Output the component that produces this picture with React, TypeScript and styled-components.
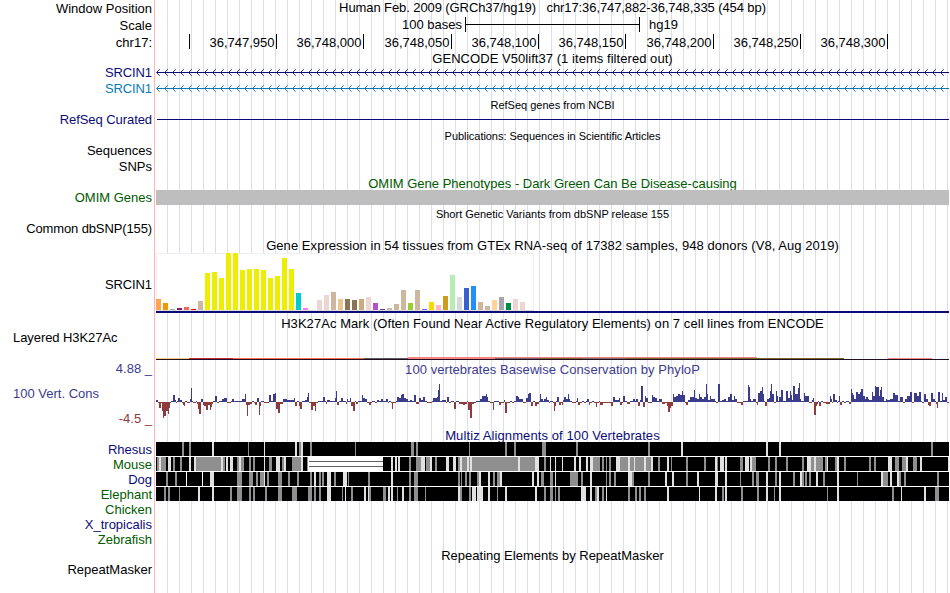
import React from "react";
import styled, { createGlobalStyle } from "styled-components";

const GlobalStyle = createGlobalStyle`
  body { margin: 0; background: #fff; }
  svg { display: block; shape-rendering: crispEdges; }
`;

const TRACK_WIDTH = 793;
const BLACK = "#000";
const NAVY = "#0c0c78";
const BLUE = "#0c78b4";
const GREEN = "#005a00";
const WIGGLE_UP = "#3c3c8c";
const WIGGLE_DOWN = "#8c3c3c";

const Browser = styled.main`
  width: 949px;
  height: 593px;
  overflow: hidden;
  font: 13px/15px "Liberation Sans", Arial, sans-serif;
  color: ${BLACK};
  background:
    linear-gradient(#ffb4b4, #ffb4b4) 154px 0 / 1px 100% no-repeat,
    repeating-linear-gradient(to right, #dcdcf8 0 1px, transparent 1px 12px) 167px 0 / 782px 100% no-repeat;
`;

const TrackRow = styled.section<{ $height: number }>`
  display: grid;
  grid-template-columns: 154px ${TRACK_WIDTH}px;
  column-gap: 2px;
  height: ${(p) => p.$height}px;
`;

const Column = styled.div`
  display: flex;
  flex-direction: column;
  min-width: 0;
`;

const Label = styled.div<{ $gap?: number; $color?: string; $left?: boolean; $spacing?: number }>`
  flex: none;
  height: 15px;
  margin-top: ${(p) => p.$gap ?? 0}px;
  padding: 0 2px 0 13px;
  text-align: ${(p) => (p.$left ? "left" : "right")};
  letter-spacing: ${(p) => p.$spacing ?? 0}px;
  color: ${(p) => p.$color ?? BLACK};
  white-space: pre;
`;

const Title = styled.h2<{ $gap?: number; $height?: number; $color?: string; $spacing?: number; $small?: boolean }>`
  flex: none;
  height: ${(p) => p.$height ?? 15}px;
  margin: ${(p) => p.$gap ?? 0}px 0 0;
  overflow: hidden;
  font-size: ${(p) => (p.$small ? 11 : 13)}px;
  font-weight: normal;
  letter-spacing: ${(p) => p.$spacing ?? 0}px;
  text-align: center;
  color: ${(p) => p.$color ?? BLACK};
  white-space: pre;
`;

const Figure = styled.div<{ $gap?: number }>`
  flex: none;
  margin-top: ${(p) => p.$gap ?? 0}px;
`;

const ScaleBar = styled.div`
  display: grid;
  grid-template-columns: 309px 175px auto;
  align-items: start;
`;

const ScaleStart = styled.span`
  padding-right: 3px;
  text-align: right;
`;

const ScaleEnd = styled.span`
  padding-left: 9px;
`;

const Ruler = styled.div`
  display: flex;
`;

const Tick = styled.div<{ $width: number }>`
  box-sizing: border-box;
  flex: none;
  width: ${(p) => p.$width}px;
  height: 15px;
  padding: 1px 1.5px 0 0;
  border-right: 1px solid ${BLACK};
  text-align: right;
  line-height: 15px;
`;

const OmimBar = styled.div`
  height: 15px;
  background: #bebebe;
`;

const AlignmentStack = styled.div`
  display: grid;
  row-gap: 1px;
  background: #fff;
`;

const ticks: [number, string][] = [
  [34, ""],
  [87, "36,747,950"],
  [87, "36,748,000"],
  [88, "36,748,050"],
  [87, "36,748,100"],
  [87, "36,748,150"],
  [88, "36,748,200"],
  [87, "36,748,250"],
  [87, "36,748,300"],
];

function GeneLine({ y, color }: { y: number; color: string }) {
  const arrows = Array.from({ length: 99 }, (_, i) => i * 8 + 0.5);
  return (
    <g stroke={color} fill="none">
      <line x1={1} x2={TRACK_WIDTH} y1={y + 0.5} y2={y + 0.5} />
      <path
        shapeRendering="auto"
        strokeWidth={0.85}
        d={arrows.map((x) => `M${x + 3.3} ${y - 2.8}L${x} ${y + 0.5}L${x + 3.3} ${y + 3.8}`).join("")}
      />
    </g>
  );
}

const Y = "#eeee00";
const TAN = "#cdb79e";
const ROSE = "#eed5d2";
const tissues: [string, number][] = [
  ["#ffa54f", 11], ["#ee9a00", 7], ["#8fbc8f", 1], ["#8b1c62", 2], ["#ee6a50", 3], ["#ff0000", 1], [TAN, 9],
  [Y, 37], [Y, 38], [Y, 32], [Y, 57], [Y, 57], [Y, 40], [Y, 41], [Y, 41], [Y, 40], [Y, 32], [Y, 34], [Y, 52], [Y, 41],
  ["#00cdcd", 17], ["#ee82ee", 2], ["#9ac0cd", 0], [ROSE, 10], [ROSE, 15], [TAN, 18], ["#eec591", 11],
  ["#8b7355", 11], ["#8b7355", 10], ["#cdaa7d", 11], [ROSE, 13], ["#b452cd", 7], ["#7a378b", 1], [TAN, 2], [TAN, 6],
  [TAN, 20], ["#9acd32", 7], [TAN, 20], ["#7a67ee", 1], ["#ffd700", 8], ["#ffb6c1", 5], ["#cd9b1d", 14],
  ["#b4eeb4", 35], ["#d9d9d9", 13], ["#3a5fcd", 22], ["#1e90ff", 24], [TAN, 8], [TAN, 4], ["#ffd39b", 10],
  ["#a6a6a6", 13], ["#008b45", 7], [ROSE, 11], [ROSE, 8], ["#ff00ff", 0],
];

function ExpressionChart() {
  return (
    <svg width={TRACK_WIDTH} height={60}>
      <rect x={0.5} y={0.5} width={377} height={57} fill="#fff" stroke="#f0f0f0" />
      <rect x={0} y={57} width={378} height={1} fill="#dcdcdc" />
      {tissues.map(([color, h], i) => (
        <rect key={i} x={i * 7} y={57 - h} width={5} height={h} fill={color} />
      ))}
      <rect x={0} y={58} width={TRACK_WIDTH} height={2} fill={NAVY} />
    </svg>
  );
}

// x, y, width, height, colour of every overlaid cell-line signal
const h3k27ac: [number, number, number, number, string][] = [
  [0, 1, 33, 1, "#ffcc80"],
  [33, 1, 44, 1, "#c4283c"],
  [77, 1, 131, 1, "#ff6a50"],
  [208, 1, 44, 1, "#605860"],
  [252, 0, 87, 2, "#ff8080"],
  [339, 0, 262, 1, "#f08080"],
  [339, 1, 44, 1, "#806070"],
  [383, 1, 43, 1, "#80602c"],
  [426, 1, 44, 1, "#806868"],
  [470, 1, 218, 1, "#7c6428"],
  [732, 1, 44, 1, "#ff8080"],
];

// Conservation scores: "end:height" runs, ends in thirds of a pixel from each block's start.
const wiggleBlocks: { x: number; start: number; runs: string }[] = [
  {
    x: -6,
    start: 18,
    runs: "24:2 27:-1 33:-6 36:-1 39:-9 42:-16 48:-14 51:-9 54:-9 57:-12 60:-6 63:-1 69:1 75:7 78:2 81:-1 84:1 90:4 96:2 99:-1 102:-3 105:-4 111:1 120:-1 123:3 126:14 129:1 138:-1 141:1 144:-2 147:-7 153:-12 159:3 162:-3 168:-4 174:-8 180:-3 183:-8 186:-5 189:-2 195:1 201:6 207:-1 216:1 222:3 231:4 243:-1 246:1 252:3 276:1 285:3 288:8 291:-3 294:-14 300:-3 306:-2 312:1 315:-1 321:-3 327:4 330:-13 333:-4 342:1 357:-1 363:7 369:1 372:8 375:8 378:9 384:-7 390:-11 399:-2 411:3 426:2 432:2 435:4 441:-4 447:1 450:-4 456:-7 465:1 471:2 474:5 477:9 483:-1 489:-8 495:-4 498:-9 504:-1 519:1 525:5 528:1 531:-2 540:2 555:1 558:4 561:11 567:-3 573:1 579:4 588:1 591:-2 594:3 600:1",
  },
  {
    x: 194,
    start: 0,
    runs: "3:4 9:-4 15:-9 18:1 24:-2 36:1 39:7 45:4 51:3 57:-1 63:-3 66:-1 75:1 81:-1 87:2 93:1 99:3 108:1 114:3 117:-1 123:1 126:-1 129:-7 138:-1 141:1 147:5 153:4 157:7 162:8 168:4 174:3 180:1 186:2 192:1 198:7 207:-2 213:4 219:2 225:5 231:1 246:-1 249:1 261:4 264:5 267:12 270:18 276:1 288:2 291:-1 297:5 303:-1 312:1 318:-7 327:1 339:-2 345:-3 351:-2 354:1 360:-8 366:-16 372:-2 378:-1 390:1 396:3 408:6 411:8 414:5 420:1 429:-1 432:-8 447:1 453:-3 462:-1 465:2 471:-11 480:-1 486:1 492:-1 498:1 504:6 507:5 519:3 528:-1 534:4 537:8 543:9 549:-4 555:1 561:-4 567:-2 570:1 573:8 579:3 582:1 588:3 591:5 597:2 600:-1",
  },
  {
    x: 394,
    start: 0,
    runs: "9:1 12:-1 15:-9 18:-4 21:1 27:5 33:-3 36:-1 39:-3 42:2 48:5 54:3 57:8 60:3 66:1 78:-1 81:1 84:4 90:-3 96:-1 102:1 108:-1 111:1 117:3 120:-3 126:-1 132:1 138:-1 141:-5 147:-1 150:1 159:-3 183:-1 189:-4 195:5 207:2 210:4 216:-3 219:-1 225:6 231:1 240:-2 249:1 255:3 258:1 264:3 270:-4 273:2 279:16 285:-5 288:6 294:4 306:-1 309:7 315:5 321:4 327:1 336:3 345:-2 351:-1 354:-4 360:-10 363:-6 369:-4 372:8 378:5 384:6 390:8 396:7 399:11 405:7 408:-1 414:-3 420:2 432:5 435:12 441:4 447:3 450:8 456:5 462:3 468:5 471:18 474:8 480:2 483:6 495:3 498:1 504:-1 510:18 516:1 522:2 528:3 534:1 540:5 546:8 552:2 555:6 561:3 573:-1 579:-3 594:1 597:17 600:15",
  },
  {
    x: 594,
    start: 0,
    runs: "3:3 9:1 18:3 21:-1 24:-3 30:9 36:11 39:15 42:8 45:1 51:-4 57:3 60:4 63:11 66:18 72:8 78:-1 81:11 84:6 87:1 93:5 99:12 108:1 114:11 120:4 123:11 126:7 129:2 135:16 144:8 147:14 150:19 153:3 162:1 165:9 177:6 186:-1 189:2 192:4 198:-13 201:-4 204:-2 207:1 213:-4 219:1 228:-1 240:-2 243:6 246:3 249:-1 255:8 261:2 264:-1 267:1 270:6 276:-3 282:1 288:-1 297:1 303:-2 306:13 309:9 312:7 318:3 324:10 330:8 333:10 339:13 345:6 348:3 354:5 357:3 366:2 369:10 375:6 378:16 387:15 390:6 393:12 396:15 402:5 408:1 411:3 420:2 429:3 435:9 444:7 450:1 459:5 465:-1 471:3 480:6 486:10 492:-1 501:9 507:6 513:10 516:1 522:-1 528:8 534:3 537:-3 543:-4 549:9 555:3 558:1 561:-2 564:-6 570:10 576:1 579:9 585:2 591:5 597:-1",
  },
];

function Conservation() {
  const zero = 22;
  return (
    <svg width={TRACK_WIDTH} height={44}>
      {wiggleBlocks.map((block) => {
        let from = block.start;
        return block.runs.split(" ").map((run) => {
          const [end, value] = run.split(":").map(Number);
          const x = block.x + Math.round(from / 3);
          const width = block.x + Math.round(end / 3) - x;
          from = end;
          return (
            <rect
              key={`${block.x}-${end}`}
              x={x}
              y={value > 0 ? zero - value : zero}
              width={width}
              height={Math.abs(value)}
              fill={value > 0 ? WIGGLE_UP : WIGGLE_DOWN}
            />
          );
        });
      })}
    </svg>
  );
}

// Identity bands per species, four blocks of 200px each; g = partial, l = low identity,
// positions in thirds of a pixel from the block's start.
const rhesus = [
  "g96-102 g117-123 l186-192 g294-297 l342-345 l435-441 g447-453 l453-459 g480-486",
  "g15-18 g183-192 g198-204 g357-360 g465-471 g492-498 g576-588",
  "g78-84 g294-300 l393-399",
  "l48-54 l87-93 g543-549",
];
const mouse = [
  "g21-27 l27-33 g33-48 l54-63 g69-75 g90-96 l117-123 l132-138 g138-213 l213-219 g219-225 l228-234 l240-249 g261-267 l267-273 g273-282 g297-303 g309-315 l342-345 g357-366 l378-390 g396-402 l402-408 g426-453 l453-459 g471-474",
  "l123-129 l135-141 l144-150 g177-183 g198-213 l213-225 g228-240 l240-246 g255-261 l288-297 l309-318 g324-330 l330-336 g336-351 l351-357 g357-360 l360-366 g366-504 l504-510 g510-555 l555-567 g582-588",
  "l0-3 l15-18 l36-39 l72-78 l87-93 l108-114 l120-129 g129-150 g156-162 g168-171 g177-183 l198-210 g210-234 l234-240 g240-252 l252-255 g255-282 l282-288 g288-303 l303-309 g324-330 l351-357 g363-366 g408-414 g462-468 l495-501 g501-504 l510-522 l525-531 g570-579 l585-597",
  "l0-6 g6-18 g54-60 g75-81 g108-114 g156-162 l171-183 g183-192 l192-198 g198-219 g225-231 l231-234 g255-261 l261-267 g282-288 g357-363 g372-378 l414-426 g435-447 g456-468 l468-474 g489-501 l510-516 l594-597",
];
const dog = [
  "g48-54 g75-81 w108-111 w156-159 l180-192 g261-276 g297-309 g318-324 g330-342 l342-345 g351-357 g384-396 g414-420 g441-447 g480-486 l492-498 g507-513 g516-522 l531-543 g552-558 l579-591 g594-597",
  "g54-60 l123-129 g177-183 g192-204 g324-330 g333-336 g345-351 g357-363 g381-387 l387-393 l414-420 g429-435 g441-450 l450-456 l546-552 l561-567 g573-582",
  "g0-9 l15-18 g60-84 g93-99 l120-126 g168-171 g177-183 g192-198 l234-246 g246-252 g294-300 l345-351 l366-372 g408-414 l441-447 l495-504 l525-531 g570-573",
  "g6-12 g18-27 l48-54 g75-81 l87-93 g129-135 l150-156 g156-162 g165-171 g177-183 l198-204 g219-225 l261-267 g321-324 l393-399 g399-414 l420-426 l441-447 g447-453 g462-468 g561-567",
];
const elephant = [
  "g42-48 g54-60 g87-90 l144-150 l186-192 g240-246 g261-276 g297-303 g309-315 g345-351 g384-396 g426-441 g474-486 g492-498 g507-513 l531-543 g576-579 l585-588",
  "g3-9 l42-48 l54-57 g57-63 g99-108 l114-120 l123-129 g141-144 l156-162 g177-183 g192-204 g225-228 l324-330 g330-336 g357-363 l366-378 l381-399 l414-420 g441-444 l465-471 l555-561 g582-588",
  "g0-9 g15-18 g24-30 l93-108 l120-126 g135-141 l141-147 g156-162 l168-171 g234-240 g255-261 g267-273 g282-288 l351-357 l447-450 l495-501 g516-522 l525-531 g573-579",
  "g21-27 l48-54 g72-75 l87-93 g231-234 l261-267 g426-432 l453-456 l522-528 g555-567",
];
const bandColor: Record<string, string> = { g: "#8f8f8f", l: "#e1e1e1", w: "#ffffff" };

function Alignment({ blocks, gap }: { blocks: string[]; gap?: [number, number] }) {
  return (
    <svg width={TRACK_WIDTH} height={14}>
      <rect width={TRACK_WIDTH} height={14} fill={BLACK} />
      {blocks.map((block, b) =>
        block.split(" ").map((band) => {
          const [from, to] = band.slice(1).split("-").map(Number);
          return (
            <rect
              key={`${b}-${band}`}
              x={b * 200 - 6 + from / 3}
              width={(to - from) / 3}
              height={14}
              fill={bandColor[band[0]]}
            />
          );
        })
      )}
      {gap && (
        <g>
          <rect x={gap[0]} width={gap[1] - gap[0]} height={14} fill="#fff" />
          <rect x={gap[0] + 1} y={4} width={gap[1] - gap[0] - 1} height={1} fill="#606060" />
          <rect x={gap[0] + 1} y={9} width={gap[1] - gap[0] - 1} height={1} fill="#606060" />
        </g>
      )}
    </svg>
  );
}

export default function App() {
  return (
    <>
      <GlobalStyle />
      <Browser>
        <TrackRow $height={17}>
          <Column><Label $gap={1}>Window Position</Label></Column>
          <Column>
            <Title $spacing={-0.09}>{"Human Feb. 2009 (GRCh37/hg19)   chr17:36,747,882-36,748,335 (454 bp)"}</Title>
          </Column>
        </TrackRow>

        <TrackRow $height={17}>
          <Column><Label $gap={1}>Scale</Label></Column>
          <Column>
            <ScaleBar>
              <ScaleStart>100 bases</ScaleStart>
              <svg width={175} height={15}>
                <path d="M0 0h1v15h-1zM174 0h1v15h-1zM0 7h175v1h-175z" fill={BLACK} />
              </svg>
              <ScaleEnd>hg19</ScaleEnd>
            </ScaleBar>
          </Column>
        </TrackRow>

        <TrackRow $height={17}>
          <Column><Label $gap={1}>chr17:</Label></Column>
          <Column>
            <Ruler>
              {ticks.map(([width, text], i) => (
                <Tick key={i} $width={width}>{text}</Tick>
              ))}
            </Ruler>
          </Column>
        </TrackRow>

        <TrackRow $height={46}>
          <Column>
            <Label $gap={14} $color={NAVY} $spacing={-0.1}>SRCIN1</Label>
            <Label $gap={1} $color={BLUE} $spacing={-0.1}>SRCIN1</Label>
          </Column>
          <Column>
            <Title $spacing={0.05}>GENCODE V50lift37 (1 items filtered out)</Title>
            <Figure>
              <svg width={TRACK_WIDTH} height={30}>
                <GeneLine y={6} color={NAVY} />
                <GeneLine y={22} color={BLUE} />
              </svg>
            </Figure>
          </Column>
        </TrackRow>

        <TrackRow $height={31}>
          <Column><Label $gap={15} $color={NAVY} $spacing={-0.07}>RefSeq Curated</Label></Column>
          <Column>
            <Title $small $gap={1}>RefSeq genes from NCBI</Title>
            <Figure $gap={6}>
              <svg width={TRACK_WIDTH} height={1}><rect x={1} width={792} height={1} fill={NAVY} /></svg>
            </Figure>
          </Column>
        </TrackRow>

        <TrackRow $height={47}>
          <Column>
            <Label $gap={15}>Sequences</Label>
            <Label $gap={1}>SNPs</Label>
          </Column>
          <Column><Title $small $gap={1} $spacing={-0.04}>Publications: Sequences in Scientific Articles</Title></Column>
        </TrackRow>

        <TrackRow $height={31}>
          <Column><Label $gap={15} $color={GREEN}>OMIM Genes</Label></Column>
          <Column>
            <Title $gap={1} $height={14} $color={GREEN}>OMIM Gene Phenotypes - Dark Green Can Be Disease-causing</Title>
            <OmimBar />
          </Column>
        </TrackRow>

        <TrackRow $height={31}>
          <Column><Label $gap={15} $spacing={-0.12}>Common dbSNP(155)</Label></Column>
          <Column><Title $small $gap={1}>Short Genetic Variants from dbSNP release 155</Title></Column>
        </TrackRow>

        <TrackRow $height={78}>
          <Column><Label $gap={40} $spacing={-0.1}>SRCIN1</Label></Column>
          <Column>
            <Title $gap={1} $spacing={0.06}>Gene Expression in 54 tissues from GTEx RNA-seq of 17382 samples, 948 donors (V8, Aug 2019)</Title>
            <ExpressionChart />
          </Column>
        </TrackRow>

        <TrackRow $height={46}>
          <Column><Label $gap={15} $left $spacing={-0.07}>Layered H3K27Ac</Label></Column>
          <Column>
            <Title $gap={1} $spacing={0.06}>H3K27Ac Mark (Often Found Near Active Regulatory Elements) on 7 cell lines from ENCODE</Title>
            <Figure $gap={26}>
              <svg width={TRACK_WIDTH} height={3}>
                {h3k27ac.map(([x, y, w, h, fill], i) => (
                  <rect key={i} x={x} y={y} width={w} height={h} fill={fill} />
                ))}
                <rect y={2} width={TRACK_WIDTH} height={1} fill="#201020" />
              </svg>
            </Figure>
          </Column>
        </TrackRow>

        <TrackRow $height={66}>
          <Column>
            <Label $color={WIGGLE_UP}>4.88 _</Label>
            <Label $gap={10} $left $color={WIGGLE_UP}>100 Vert. Cons</Label>
            <Label $gap={10} $color={WIGGLE_DOWN}>-4.5 _</Label>
          </Column>
          <Column>
            <Title $gap={1} $color={WIGGLE_UP} $spacing={0.06}>100 vertebrates Basewise Conservation by PhyloP</Title>
            <Figure $gap={3}><Conservation /></Figure>
          </Column>
        </TrackRow>

        <TrackRow $height={120}>
          <Column>
            <Label $gap={15} $color={NAVY}>Rhesus</Label>
            <Label $color={GREEN}>Mouse</Label>
            <Label $color={NAVY}>Dog</Label>
            <Label $color={GREEN}>Elephant</Label>
            <Label $color={GREEN}>Chicken</Label>
            <Label $color={NAVY}>X_tropicalis</Label>
            <Label $color={GREEN}>Zebrafish</Label>
          </Column>
          <Column>
            <Title $gap={1} $height={14} $color={NAVY} $spacing={0.1}>Multiz Alignments of 100 Vertebrates</Title>
            <AlignmentStack>
              <Alignment blocks={rhesus} />
              <Alignment blocks={mouse} gap={[152, 227]} />
              <Alignment blocks={dog} />
              <Alignment blocks={elephant} />
            </AlignmentStack>
          </Column>
        </TrackRow>

        <TrackRow $height={46}>
          <Column><Label $gap={15}>RepeatMasker</Label></Column>
          <Column><Title $gap={1}>Repeating Elements by RepeatMasker</Title></Column>
        </TrackRow>
      </Browser>
    </>
  );
}
